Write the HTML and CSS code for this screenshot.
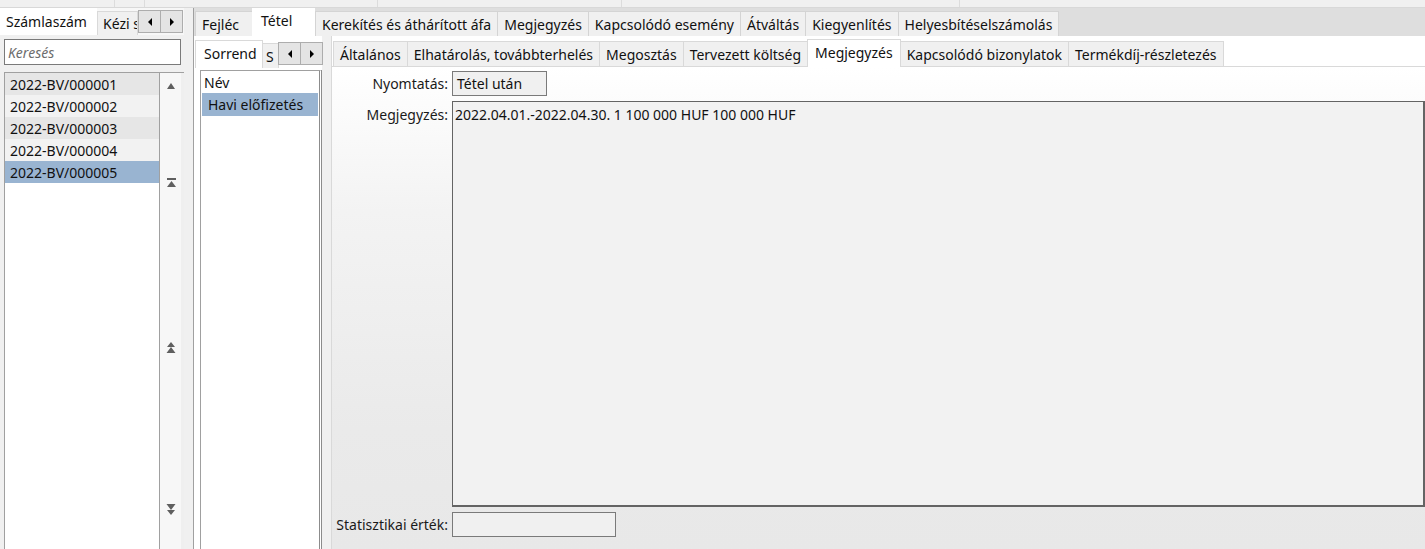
FILE: index.html
```html
<!DOCTYPE html>
<html lang="hu">
<head>
<meta charset="utf-8">
<title>Számla</title>
<link rel="stylesheet" href="styles.css">
</head>
<body>
<div class="top">
  <div class="tc c1"></div><div class="tc c2"></div><div class="tc c3"></div><div class="tc c4"></div><div class="tc c5"></div><div class="tc c6"></div>
</div>
<div class="main">
  <div class="left">
    <div class="ltabs">
      <div class="tab lact">Számlaszám</div>
      <div class="tab lclip">Kézi s</div>
      <div class="arrows">
        <div class="abtn"><span class="tri-l"></span></div>
        <div class="abtn"><span class="tri-r"></span></div>
      </div>
    </div>
    <div class="search">Keresés</div>
    <div class="lframe">
      <div class="rows">
        <div class="row alt">2022-BV/000001</div>
        <div class="row">2022-BV/000002</div>
        <div class="row alt">2022-BV/000003</div>
        <div class="row">2022-BV/000004</div>
        <div class="row sel">2022-BV/000005</div>
      </div>
      <div class="vscroll">
        <svg class="ic ic-up" width="10" height="8" viewBox="0 0 10 8"><path d="M5 1 L9 7 L1 7 Z" fill="#5f5f5f"/></svg>
        <svg class="ic ic-first" width="10" height="10" viewBox="0 0 10 10"><rect x="1" y="0" width="9" height="2" fill="#5f5f5f"/><path d="M5.5 3 L10 9 L1 9 Z" fill="#5f5f5f"/></svg>
        <svg class="ic ic-pup" width="10" height="12" viewBox="0 0 10 12"><path d="M5 0 L9 5 L1 5 Z M5 5 L9.5 11 L0.5 11 Z" fill="#5f5f5f"/></svg>
        <svg class="ic ic-pdn" width="10" height="12" viewBox="0 0 10 12"><path d="M0.5 0 L9.5 0 L5 6 Z M1 6 L9 6 L5 11 Z" fill="#5f5f5f"/></svg>
      </div>
      <div class="lgutter"></div>
    </div>
  </div>
  <div class="split"></div>
  <div class="work">
    <div class="wtabs">
      <div class="tab wt">Fejléc</div>
      <div class="tab wact">Tétel</div>
      <div class="tab wt">Kerekítés és áthárított áfa</div>
      <div class="tab wt">Megjegyzés</div>
      <div class="tab wt">Kapcsolódó esemény</div>
      <div class="tab wt">Átváltás</div>
      <div class="tab wt">Kiegyenlítés</div>
      <div class="tab wt">Helyesbítéselszámolás</div>
    </div>
    <div class="page">
      <div class="mid">
        <div class="mtabs">
          <div class="tab mact">Sorrend</div>
          <div class="tab mclip">S</div>
          <div class="arrows marrows">
            <div class="abtn"><span class="tri-l"></span></div>
            <div class="abtn"><span class="tri-r"></span></div>
          </div>
        </div>
        <div class="mframe">
          <div class="mlist">
            <div class="mhdr">Név</div>
            <div class="mrow">Havi előfizetés</div>
          </div>
        </div>
      </div>
      <div class="mgap"></div>
      <div class="detail">
        <div class="dtabs">
          <div class="tab dt">Általános</div>
          <div class="tab dt">Elhatárolás, továbbterhelés</div>
          <div class="tab dt">Megosztás</div>
          <div class="tab dt">Tervezett költség</div>
          <div class="tab dact">Megjegyzés</div>
          <div class="tab dt">Kapcsolódó bizonylatok</div>
          <div class="tab dt">Termékdíj-részletezés</div>
        </div>
        <div class="form">
          <div class="lbl l1">Nyomtatás:</div>
          <div class="field f1">Tétel után</div>
          <div class="lbl l2">Megjegyzés:</div>
          <div class="field memo">2022.04.01.-2022.04.30. 1 100 000 HUF 100 000 HUF</div>
          <div class="lbl l3">Statisztikai érték:</div>
          <div class="field f3"></div>
        </div>
      </div>
    </div>
  </div>
</div>
</body>
</html>
```

FILE: styles.css
```css
* { box-sizing: border-box; }
html, body { margin: 0; padding: 0; }
body {
  width: 1425px;
  height: 549px;
  overflow: hidden;
  background: #f0f0f0;
  font-family: "Noto Sans", "Open Sans", sans-serif;
  font-size: 14px;
  color: #111;
}

.top {
  height: 8px;
  display: grid;
  grid-template-columns: 115px 30px 233px 244px 338px 1fr;
  border-bottom: 1px solid #d8d8d8;
  background: #f0f0f0;
}
.tc { border-right: 1px solid #dcdcdc; }
.tc.c6 { border-right: 0; }

.main {
  display: flex;
  height: 541px;
}

/* ---------- left column ---------- */
.left {
  width: 184px;
  display: flex;
  flex-direction: column;
  background: #f0f0f0;
}
.ltabs {
  height: 27px;
  display: flex;
  align-items: flex-end;
  background: #f7f7f7;
  position: relative;
}
.tab {
  display: flex;
  align-items: center;
  white-space: nowrap;
  overflow: hidden;
}
.lact {
  width: 97px;
  height: 27px;
  padding-left: 6px;
  background: #fff;
}
.lclip {
  width: 41px;
  height: 24px;
  padding-left: 5px;
  background: #f0f0f0;
  border: 1px solid #d9d9d9;
  border-bottom: 0;
}
.arrows {
  display: flex;
  height: 23px;
  margin-bottom: 2px;
  position: absolute;
  left: 138px;
  bottom: 0;
}
.abtn {
  width: 23px;
  height: 23px;
  background: #e4e4e4;
  border: 1px solid #adadad;
  display: flex;
  align-items: center;
  justify-content: center;
}
.abtn + .abtn { border-left: 0; width: 22px; }
.tri-l, .tri-r { width: 0; height: 0; border-top: 4px solid transparent; border-bottom: 4px solid transparent; }
.tri-l { border-right: 4px solid #000; }
.tri-r { border-left: 4px solid #000; }

.search {
  margin: 4px 0 0 4px;
  width: 177px;
  height: 26px;
  border: 1px solid #7a7a7a;
  background: #fff;
  color: #6d6d6d;
  font-style: italic;
  padding-left: 3px;
  display: flex;
  align-items: center;
}
.lframe {
  margin: 7px 0 0 4px;
  flex: 1;
  display: flex;
  border-left: 1px solid #a0a0a0;
  border-top: 1px solid #a0a0a0;
}
.rows {
  width: 155px;
  background: #fff;
  border-right: 1px solid #a0a0a0;
}
.row {
  height: 22px;
  padding-left: 5px;
  display: flex;
  align-items: center;
  background: #f2f2f2;
}
.row.alt { background: #e6e6e6; }
.row.sel { background: #99b4d1; }
.vscroll {
  width: 21px;
  background: #f7f7f7;
  display: flex;
  flex-direction: column;
  align-items: center;
}
.ic { display: block; flex: none; }
.ic-up { margin-top: 9px; }
.ic-first { margin-top: 88px; }
.ic-pup { margin-top: 154px; }
.ic-pdn { margin-top: 150px; }
.lgutter { flex: 1; background: #efefef; }

.split {
  width: 10px;
  background: #f0f0f0;
  border-right: 1px solid #a0a0a0;
}

/* ---------- work area ---------- */
.work {
  flex: 1;
  display: flex;
  flex-direction: column;
  background: #fff;
}
.wtabs {
  height: 28px;
  display: flex;
  align-items: flex-end;
  background: #dedede;
  padding-left: 1px;
}
.wt {
  height: 25px;
  padding: 0 6px;
  background: #f0f0f0;
  border: 1px solid #d4d4d4;
  border-bottom: 0;
  border-right: 0;
}
.wt:first-child { width: 57px; }
.wt:last-child { border-right: 1px solid #d4d4d4; }
.wact {
  height: 28px;
  width: 63px;
  padding: 0 0 4px 9px;
  background: #fff;
}
.page {
  flex: 1;
  display: flex;
  padding-top: 4px;
}

.mid {
  width: 128px;
  display: flex;
  flex-direction: column;
}
.mtabs {
  height: 28px;
  display: flex;
  align-items: flex-end;
  position: relative;
  padding-left: 1px;
}
.mact {
  width: 68px;
  height: 28px;
  padding: 0 0 2px 8px;
  background: #fff;
  border: 1px solid #d9d9d9;
  border-bottom: 0;
}
.mclip {
  width: 16px;
  height: 25px;
  padding-left: 3px;
  background: #f0f0f0;
  border: 1px solid #d9d9d9;
  border-left: 0;
  border-bottom: 0;
}
.marrows { left: 84px; bottom: 3px; margin: 0; }
.mframe {
  margin: 2px 0 0 6px;
  flex: 1;
  border: 1px solid #a0a0a0;
  border-bottom: 0;
  border-right: 3px double #8c8c8c;
  padding: 1px;
}
.mlist { background: #fff; height: 100%; }
.mhdr {
  height: 21px;
  padding-left: 2px;
  display: flex;
  align-items: center;
}
.mrow {
  height: 23px;
  padding-left: 6px;
  display: flex;
  align-items: center;
  background: #99b4d1;
}
.mgap {
  width: 10px;
  background: #f0f0f0;
  margin-top: -4px;
  border-right: 1px solid #d9d9d9;
}

.detail {
  flex: 1;
  display: flex;
  flex-direction: column;
}
.dtabs {
  height: 27px;
  display: flex;
  align-items: flex-end;
  padding-left: 1px;
  border-bottom: 1px solid #d9d9d9;
}
.dt {
  height: 25px;
  padding: 0 6px;
  background: #f0f0f0;
  border: 1px solid #d9d9d9;
  border-bottom: 0;
  border-right: 0;
}
.dt:last-child { border-right: 1px solid #d9d9d9; }
.dact {
  height: 28px;
  padding: 0 7px 3px 7px;
  background: #fff;
  border: 1px solid #d9d9d9;
  border-bottom: 0;
  margin-bottom: -1px;
  position: relative;
}
.dact + .dt { border-left: 0; }

.form {
  flex: 1;
  display: grid;
  grid-template-columns: 116px 1fr;
  grid-template-rows: 25px 406px 25px;
  column-gap: 4px;
  row-gap: 5px;
  padding-top: 4px;
  background: linear-gradient(#ffffff 0%, #f3f3f3 30%, #eaeaea 75%, #e8e8e8 100%);
}
.lbl {
  text-align: right;
  white-space: nowrap;
  color: #1a1a1a;
  display: flex;
  justify-content: flex-end;
  align-items: center;
}
.l2 { align-items: flex-start; padding-top: 4px; }
.field {
  border: 1px solid #7a7a7a;
  background: #f0f0f0;
  padding-left: 4px;
  display: flex;
  align-items: center;
}
.f1 { width: 95px; }
.memo {
  align-items: flex-start;
  padding: 3px 0 0 2px;
  border-color: #646464;
  border-width: 1px 2px 2px 1px;
  background: #f2f2f2;
}
.f3 { width: 164px; }
```
